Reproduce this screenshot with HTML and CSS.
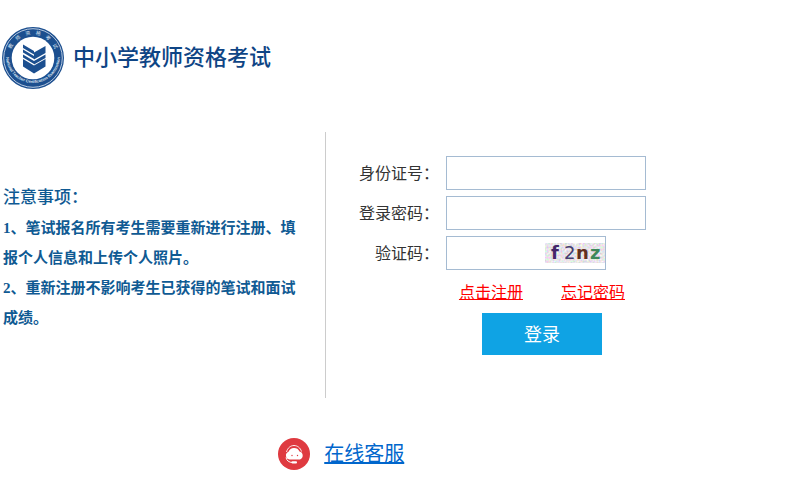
FILE: index.html
```html
<!DOCTYPE html>
<html lang="zh-CN">
<head>
    <meta charset="UTF-8">
    <meta name="viewport" content="width=device-width, initial-scale=1.0">
    <title>中小学教师资格考试</title>
    <link rel="stylesheet" href="styles.css">
</head>
<body>

    <header class="header">
        <svg class="emblem" viewBox="0 0 62 62" aria-hidden="true">
            <defs>
                <path id="arc-top" d="M7.500 31a23.500 23.500 0 0 1 47 0"/>
                <path id="arc-bottom" d="M4 29a27 27 0 0 0 54 0"/>
            </defs>
            <circle cx="31" cy="31" r="31" fill="#1c4f8f"/>
            <circle cx="31" cy="31" r="29.300" fill="none" stroke="#c9d7e9" stroke-width="0.900"/>
            <circle cx="31" cy="31" r="21.300" fill="#fff"/>
            <text class="ring-cn"><textPath href="#arc-top" startOffset="50%" text-anchor="middle">教　师　资　格　考　试</textPath></text>
            <text class="ring-en"><textPath href="#arc-bottom" startOffset="50%" text-anchor="middle">National Teacher Certification Examination</textPath></text>
            <!-- open book -->
            <g fill="#1c4f8f">
                <path d="M21 17.500l11 6.500v3.500l-11-6.500z"/>
                <path d="M21 22.500l11 6.500v3l-11-6.500z"/>
                <path d="M21 27.500l11 6.500v3l-11-6.500z"/>
                <path d="M32 25.500l11.500-6.500v7L32 32.500z"/>
                <path d="M32 34l11.500-6.500v3.500L32 37.500z"/>
                <path d="M21 32l11 6.500 11.500-6.500v7.500L32 46.500l-11-7z"/>
            </g>
        </svg>
        <h1>中小学教师资格考试</h1>
    </header>

    <main class="main">
        <section class="notice">
            <h2>注意事项：</h2>
            <p>1、笔试报名所有考生需要重新进行注册、填报个人信息和上传个人照片。</p>
            <p>2、重新注册不影响考生已获得的笔试和面试成绩。</p>
        </section>

        <form class="login-form">
            <div class="row">
                <label for="idcard">身份证号：</label>
                <input type="text" id="idcard" class="field">
            </div>
            <div class="row">
                <label for="password">登录密码：</label>
                <input type="password" id="password" class="field">
            </div>
            <div class="row">
                <label for="code">验证码：</label>
                <div class="field code-field">
                    <input type="text" id="code">
                    <svg class="captcha" viewBox="0 0 60 20" role="img" aria-label="验证码">
                        <filter id="noise" x="0" y="0" width="100%" height="100%">
                            <feTurbulence type="fractalNoise" baseFrequency="0.5" numOctaves="2" seed="4"/>
                            <feColorMatrix values="0.8 0 0 0 0.41  0 0.8 0 0 0.38  0 0 0.8 0 0.41  0 0 0 0 1"/>
                        </filter>
                        <rect width="60" height="20" filter="url(#noise)"/>
                        <text x="6" y="16" fill="#44266a">f</text>
                        <text class="thin" x="19" y="16" fill="#453d70">2</text>
                        <text x="31" y="16" fill="#63301f">n</text>
                        <text x="45" y="16" fill="#3d875a">z</text>
                    </svg>
                </div>
            </div>
            <div class="links">
                <a href="#">点击注册</a>
                <a href="#">忘记密码</a>
            </div>
            <button type="submit">登录</button>
        </form>
    </main>

    <footer class="support">
        <svg class="support-icon" viewBox="0 0 32 32" aria-hidden="true">
            <circle cx="16" cy="16" r="16" fill="#df3a40"/>
            <path d="M8.500 14C9.500 10 12.500 7.500 16 7.500s6.500 2.500 7.500 6" fill="none" stroke="#fff" stroke-width="0.900"/>
            <path d="M11.500 21.500a4 4 0 0 1-1-7.700 6 6 0 0 1 11-.3 4.200 4.200 0 0 1 .5 8z" fill="#fff"/>
            <path d="M8 19.500c.5 3 3 5 6.500 5" fill="none" stroke="#fff"/>
            <rect x="13.500" y="23.300" width="5.500" height="2.200" rx="1" fill="#fff"/>
            <circle cx="14" cy="17.500" r="0.700" fill="#df3a40"/>
            <circle cx="19.500" cy="17.500" r="0.700" fill="#df3a40"/>
        </svg>
        <a href="#">在线客服</a>
    </footer>

</body>
</html>
```
FILE: styles.css
```css
/* Page base */
body {
    margin: 0;
    background-color: #fff;
    color: #333;
    font-family: "Liberation Serif", "Noto Sans CJK SC", sans-serif;
    font-size: 16px;
}

h1, h2, p {
    margin: 0;
}

/* Header with emblem */
.header {
    display: flex;
    align-items: center;
    gap: 9px;
    padding: 27px 2px 43px;
}

.emblem {
    width: 62px;
    height: 62px;
}

.ring-cn, .ring-en {
    fill: #dfe8f3;
    font-family: "Noto Sans CJK SC", sans-serif;
}

.ring-cn {
    font-size: 5px;
}

.ring-en {
    font-family: "Liberation Sans", sans-serif;
    font-size: 4px;
    font-weight: bold;
}

.header h1 {
    padding-bottom: 6px;
    color: #0f4585;
    font-family: "Noto Sans CJK SC", sans-serif;
    font-size: 22px;
    font-weight: 500;
    line-height: 32px;
}

/* Two columns: notice and login form */
.main {
    display: flex;
}

.notice {
    box-sizing: border-box;
    width: 41%;
    padding: 51px 28px 65px 3px;
    border-right: 1px solid #ccc;
    color: #0f5a93;
    line-height: 30px;
}

.notice h2 {
    font-size: 17px;
    font-weight: 500;
}

.notice p {
    font-size: 15px;
    font-weight: bold;
}

.login-form {
    flex: 1;
    padding: 24px 0 0;
}

.row {
    display: flex;
    align-items: center;
    gap: 7px;
    margin-bottom: 6px;
}

.row label {
    width: 113px;
    padding-bottom: 2px;
    text-align: right;
}

.field {
    box-sizing: border-box;
    width: 200px;
    height: 34px;
    padding: 0 8px;
    border: 1px solid #a5bbd2;
    background-color: #fff;
    font-size: 16px;
}

.code-field {
    display: flex;
    align-items: center;
    width: 160px;
    padding: 0;
}

.code-field input {
    flex: 1;
    min-width: 0;
    padding: 0 8px;
    border: none;
    outline: none;
    font-size: 16px;
}

.captcha {
    width: 60px;
    height: 20px;
    overflow: visible;
}

.captcha text {
    font-family: "DejaVu Sans", sans-serif;
    font-size: 18px;
    font-weight: bold;
}

.captcha .thin {
    font-weight: normal;
}

.links {
    display: flex;
    gap: 38px;
    padding-left: 133px;
    line-height: 34px;
}

.links a {
    color: #f00;
}

.login-form button {
    display: block;
    width: 120px;
    height: 42px;
    margin: 3px 0 0 156px;
    padding: 0 0 2px;
    border: none;
    background-color: #0fa3e4;
    color: #fff;
    font-family: "Noto Sans CJK SC", sans-serif;
    font-size: 18px;
    cursor: pointer;
}

/* Online support */
.support {
    display: flex;
    align-items: center;
    gap: 14px;
    padding: 40px 0 14px 35%;
}

.support-icon {
    width: 32px;
    height: 32px;
}

.support a {
    color: #06c;
    font-size: 20px;
    line-height: 32px;
}
```
